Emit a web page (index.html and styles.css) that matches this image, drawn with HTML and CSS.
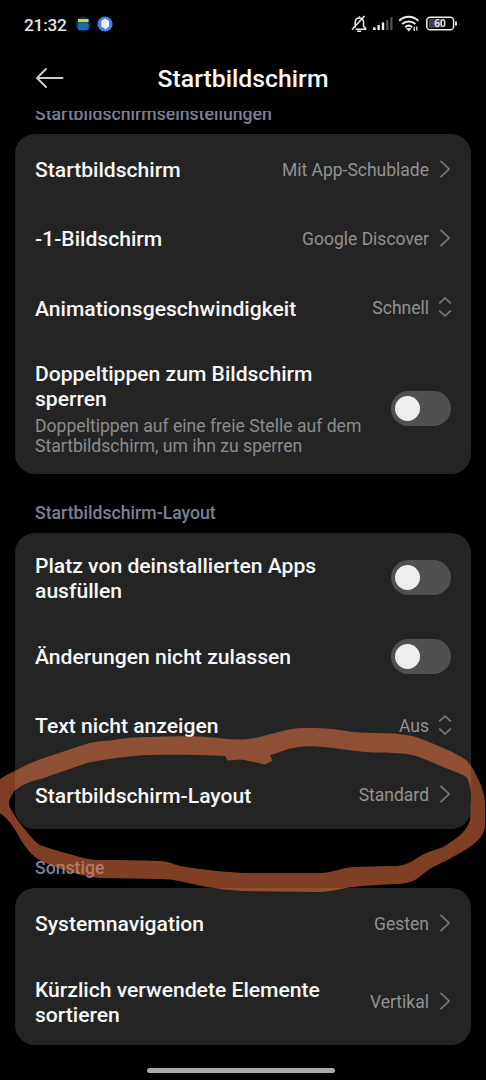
FILE: index.html
```html
<!DOCTYPE html>
<html lang="de">
<head>
<meta charset="utf-8">
<title>Startbildschirm</title>
<link rel="stylesheet" href="styles.css">
</head>
<body>
<svg class="defs" width="0" height="0">
  <symbol id="chevron" viewBox="0 0 14 20"><path d="M2.5 1.8 11 10 2.5 18.2"/></symbol>
  <symbol id="updown" viewBox="0 0 14 20"><path d="M1.2 6.3 7 1 12.8 6.3M1.2 13.7 7 19 12.8 13.7"/></symbol>
</svg>
<div class="screen">
  <div class="status">
    <span class="clock">21:32</span>
    <svg class="app-a" width="16" height="16" viewBox="0 0 16 16"><circle cx="8" cy="8" r="7.5" fill="#0a2c48"/><rect x="3" y="3" width="10.5" height="3.2" fill="#b5e04a"/><rect x="2.8" y="7" width="11" height="7" rx="1.5" fill="#1d67b4"/></svg>
    <svg class="app-b" width="16" height="16" viewBox="0 0 16 16"><circle cx="8" cy="8" r="7.6" fill="#427ee6"/><path d="M8 2.6 12 5v5.6L8.4 13.4 7 12 4.2 10.6V5z" fill="#eaf6ff"/></svg>
    <svg class="system" width="110" height="20" viewBox="0 0 110 20" fill="none" stroke="#eee" stroke-width="1.5">
      <path d="M5.2 13.8V8.4C5.2 5.4 6.8 4 9.4 4s4.2 1.7 4.2 4.4v3.8l2 2.2v.8H5.6M2 15.6 14.6 1.9M9.4 2.2V4M7.2 17.3h4"/>
      <g stroke="none" fill="#eee"><rect x="23" y="13.4" width="2.6" height="2.6"/><rect x="27.4" y="11" width="2.4" height="5"/><rect x="31.8" y="8.4" width="2.4" height="7.6"/><rect x="36.2" y="5.8" width="2.2" height="10.2" fill="#555"/><rect x="40.3" y="3.3" width="2.2" height="12.7" fill="#555"/></g>
      <path d="M49.2 6.8c5.5-5.3 13.6-5.3 19.1 0M52.2 10.1c3.8-3.6 9.4-3.6 13.2 0M55.2 13.2c2.1-1.9 4.9-1.9 7 0" stroke-width="2"/>
      <path d="M57.4 14.8h2.8l-1.4 1.6zM64.2 13v4M66.8 12.6v4" fill="#eee" stroke-width="1.3"/>
      <rect x="76.8" y="3.2" width="26.8" height="12.6" rx="3.4"/>
      <rect x="79" y="5.2" width="13" height="8.6" rx="1" fill="#444" stroke="none"/>
      <path d="M106 7.5v4" stroke-width="1.8"/>
      <text class="battery" x="90" y="13.2" text-anchor="middle">60</text>
    </svg>
  </div>
  <header class="header">
    <svg class="back" width="28" height="22" viewBox="0 0 28 22"><path d="M26.5 11H1.2M10 2 1 11l9 9"/></svg>
    <h1 class="title">Startbildschirm</h1>
  </header>
  <main class="content">
    <h2 class="label label-first">Startbildschirmseinstellungen</h2>
    <section class="card">
      <div class="row"><span class="name">Startbildschirm</span><span class="value">Mit App-Schublade</span><svg class="icon"><use href="#chevron"/></svg></div>
      <div class="row"><span class="name">-1-Bildschirm</span><span class="value">Google Discover</span><svg class="icon"><use href="#chevron"/></svg></div>
      <div class="row"><span class="name">Animationsgeschwindigkeit</span><span class="value">Schnell</span><svg class="icon"><use href="#updown"/></svg></div>
      <div class="row row-detail"><div class="name">Doppeltippen zum Bildschirm<br>sperren<p class="detail">Doppeltippen auf eine freie Stelle auf dem<br>Startbildschirm, um ihn zu sperren</p></div><span class="toggle"></span></div>
    </section>
    <h2 class="label">Startbildschirm-Layout</h2>
    <section class="card">
      <div class="row row-two"><span class="name">Platz von deinstallierten Apps<br>ausfüllen</span><span class="toggle"></span></div>
      <div class="row"><span class="name">Änderungen nicht zulassen</span><span class="toggle"></span></div>
      <div class="row"><span class="name">Text nicht anzeigen</span><span class="value">Aus</span><svg class="icon"><use href="#updown"/></svg></div>
      <div class="row"><span class="name">Startbildschirm-Layout</span><span class="value">Standard</span><svg class="icon"><use href="#chevron"/></svg></div>
    </section>
    <h2 class="label">Sonstige</h2>
    <section class="card">
      <div class="row"><span class="name">Systemnavigation</span><span class="value">Gesten</span><svg class="icon"><use href="#chevron"/></svg></div>
      <div class="row row-two"><span class="name">Kürzlich verwendete Elemente<br>sortieren</span><span class="value">Vertikal</span><svg class="icon"><use href="#chevron"/></svg></div>
    </section>
  </main>
  <div class="home"></div>
  <svg class="marker" width="486" height="1080" viewBox="0 0 486 1080">
    <path fill-rule="evenodd" d="M-3 782C2 777 8 774 15 771C27 764 40 759 53 755L83 745C92 742 101 741 110 740.500C124 738 137 737 150 737C167 736 184 736 200 736.500C215 737 229 740 243 739.500C250 739 257 738 263 736C270 734 276 733 283 731C290 729 296 728 303 728C311 728 318 728 326 728.500C337 729 349 732 360 732.500C371 733 382 733 393 733.500C401 734 409 735 416 737C425 740 434 744 443 748C451 751 460 756 466 760C471 765 474 770 476 775C479 781 482 786 483 792C485 797 485 802 485 807L485 827C484 833 481 838 476 842C471 846 466 850 460 853C451 858 442 863 433 867C425 871 418 880 410 882C406 883.500 401 884 396 884C382 885 368 885 353 887C342 888 331 892 320 892L243 891C231 890 219 889 207 887C191 884 176 879 160 879L100 878C90 877 80 875 70 872C61 869 52 866 43 862C37 859 32 855 28 850C24 845 20 839 17 833C12 824 6 817 0 813L-3 810ZM9 803C9 800 10 798 12 795C13 792 15 790 17 789C22 785 27 783 33 781C40 779 48 777 55 774L87 763C95 761 102 760 110 759C124 757 139 755 153 755C169 754.500 184 755 200 755L225 756C227 757 226 760 228 760.500C233 760 238 759 243 759.700L265 764.500L272 761C272 759 271 757 270 755C278 753 286 749 293 748C303 746 313 746 323 747C337 748 352 751 366 752C375 753 384 752 393 753C401 753 409 754 416 756C425 759 434 763 443 767C450 770 457 772 463 775C467 777 468 779 469 783C471 789 471 794 471 800L470 820C469 824 467 827 465 830C459 837 451 842 443 847L426 853C418 857 411 863 403 865C399 866 394 866 390 866L353 867C342 868 331 873 320 873L243 873C229 872 214 871 200 869C193 868 187 867 180 866C173 864 167 861 160 861C140 860 120 860 100 860C93 860 86 859 80 857C67 853 53 850 40 845C35 842 31 837 27 832C22 826 17 820 13 813C11 810 9 807 9 803Z"/>
  </svg>
</div>
</body>
</html>
```
FILE: styles.css
```css
* { box-sizing: border-box; }
body { margin: 0; background: #000; color: #f7f7f7; font-family: Roboto, sans-serif; }
.defs { position: absolute; }
.screen { position: relative; display: flex; flex-direction: column; width: 486px; height: 1080px; overflow: hidden; background: #000; }
.status { display: flex; align-items: center; height: 48px; padding: 0 24px; }
.clock { width: 43px; padding-top: 1px; font-size: 17.2px; font-weight: 500; letter-spacing: -.2px; color: #e8e8e8; white-space: nowrap; }
.app-a { margin-left: 8px; }
.app-b { margin-left: 6px; }
.system { margin-left: auto; margin-right: 2px; }
.battery { font: 600 10px "Noto Sans", sans-serif; fill: #eee; stroke: none; }
.header { display: grid; grid-template-columns: 28px 1fr 28px; align-items: center; height: 63px; padding: 0 36px 4px; }
.back { fill: none; stroke: #ccc; stroke-width: 1.9; stroke-linecap: round; stroke-linejoin: round; }
.title { margin: 0; padding-top: 2px; text-align: center; font-size: 24.8px; font-weight: 500; line-height: 30px; }
.content { height: 944px; padding: 0 15px; overflow: hidden; }
.label { margin: 0; padding: 29px 20px 9px; font-size: 17.65px; line-height: 21px; font-weight: 500; color: #7d7f94; }
.label-first { margin-top: -7px; padding-top: 0; }
.card { border-radius: 20px; background: #242424; }
.row { display: flex; align-items: center; height: 69.33px; padding: 0 20px; }
.row-two { height: 88px; }
.row-detail { height: 132px; }
.name { flex: 1; padding-top: 3.6px; font-size: 21.12px; line-height: 24.8px; font-weight: 500; white-space: nowrap; }
.detail { margin: 3.6px 0 0; font-size: 17.6px; line-height: 20.8px; font-weight: 400; color: #8c8c8c; }
.value { padding-top: 3px; font-size: 17.5px; line-height: 21px; color: #929292; white-space: nowrap; }
.icon { width: 14px; height: 20px; margin: 0 -1px 0 9px; fill: none; stroke: #777; stroke-width: 1.7; }
.toggle { width: 60.5px; height: 35px; margin-top: 1px; padding: 5px 4.5px; border-radius: 18px; background: #505050; }
.toggle::before { content: ""; display: block; width: 25px; height: 25px; border-radius: 50%; background: #eee; }
.home { width: 188px; height: 5px; margin: 13px 0 0 147px; border-radius: 3px; background: #aaa; }
.marker { position: absolute; inset: 0; fill: #e77341; fill-opacity: .55; pointer-events: none; }
```
